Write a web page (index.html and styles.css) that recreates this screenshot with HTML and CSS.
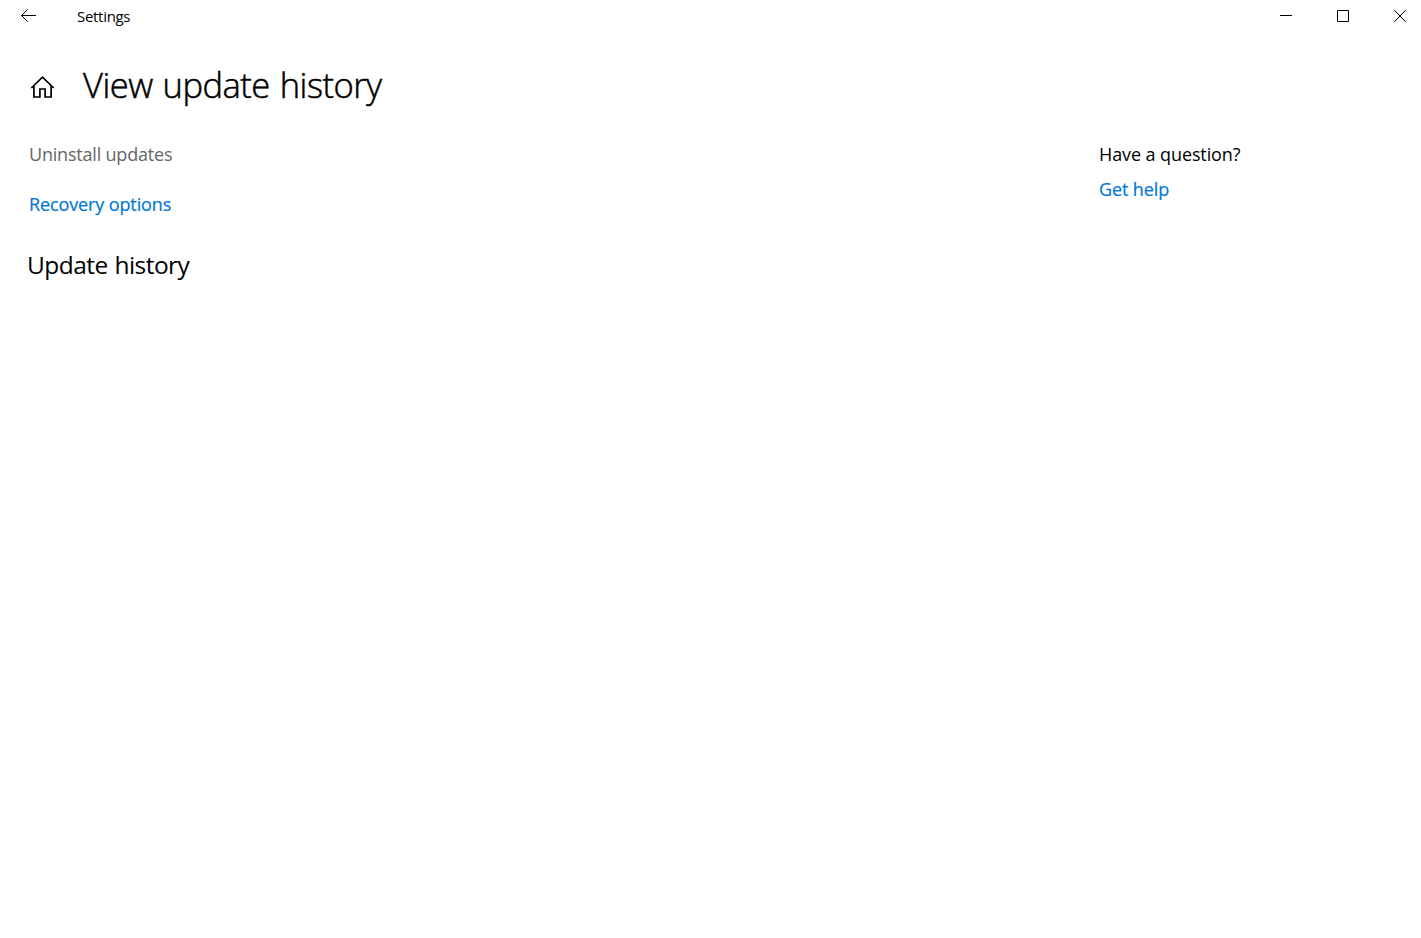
FILE: index.html
```html
<!DOCTYPE html>
<html lang="en">
<head>
  <meta charset="UTF-8" />
  <meta name="viewport" content="width=device-width, initial-scale=1.0"/>
  <title>Settings</title>
  <link rel="stylesheet" href="styles.css">
</head>
<body>

<header class="titlebar">
  <button class="back" aria-label="Back">
    <svg width="16" height="14" viewBox="0 0 16 14"><path d="M16 6.500H1.500M7.700 .4L1.500 6.500l6.200 6.200"/></svg>
  </button>
  <span class="app-name">Settings</span>
  <div class="window-controls">
    <button aria-label="Minimize"><svg width="12" height="12" viewBox="0 0 12 12"><path d="M0 5.5h12"/></svg></button>
    <button aria-label="Maximize"><svg width="12" height="12" viewBox="0 0 12 12"><path d="M.5 .5h11v11H.5z"/></svg></button>
    <button aria-label="Close"><svg width="12" height="12" viewBox="0 0 12 12"><path d="M0 0l12 12M12 0L0 12"/></svg></button>
  </div>
</header>

<div class="page-title">
  <svg class="home" width="25" height="22" viewBox="0 0 25 22"><path d="M1.300 12L12.500 1.200L23.700 12M3.900 9.800V21H9.900v-8h5.200v8h6V9.800"/></svg>
  <h1>View update history</h1>
</div>

<main class="content">
  <section class="history">
    <a class="link disabled">Uninstall updates</a>
    <a class="link" href="#">Recovery options</a>
    <h2>Update history</h2>
  </section>
  <aside class="help">
    <h3>Have a question?</h3>
    <a class="link" href="#">Get help</a>
  </aside>
</main>

</body>
</html>
```
FILE: styles.css
```css
* {
  margin: 0;
  padding: 0;
  box-sizing: border-box;
}

body {
  font-family: "Open Sans", "Noto Sans", sans-serif;
  background: #fff;
  color: #000;
}

button {
  background: none;
  border: none;
  display: flex;
  align-items: center;
  justify-content: center;
}

svg {
  fill: none;
  stroke: #000;
  display: block;
}

.titlebar {
  display: flex;
  align-items: center;
  height: 32px;
}

.back {
  width: 56px;
  height: 32px;
}

.app-name {
  margin-left: 21px;
  font-size: 15px;
  letter-spacing: -0.3px;
}

.window-controls {
  display: flex;
  gap: 15px;
  margin-left: auto;
}

.window-controls button {
  width: 42px;
  height: 32px;
}

.page-title {
  display: flex;
  align-items: center;
  height: 50px;
  margin: 29px 0 0 30px;
}

.home {
  stroke-width: 1.7;
  margin-top: 1px;
}

h1 {
  margin: -3px 0 0 28px;
  font-size: 34.5px;
  font-weight: 300;
  letter-spacing: -0.5px;
  word-spacing: 1.5px;
  -webkit-text-stroke: 0.5px #000;
}

.content {
  display: flex;
  padding: 31px 0 0 29px;
}

.history {
  width: 1070px;
}

.link {
  display: block;
  font-size: 18px;
  line-height: 24px;
  letter-spacing: -0.12px;
  color: #0078d4;
  text-decoration: none;
  -webkit-text-stroke: 0.2px #0078d4;
}

.link.disabled {
  color: #666;
  letter-spacing: -0.2px;
  margin-bottom: 26px;
  -webkit-text-stroke: 0;
}

h2 {
  margin: 32px 0 0 -2px;
  font-size: 24.5px;
  line-height: 34px;
  font-weight: 400;
  letter-spacing: -0.55px;
  word-spacing: 1px;
}

h3 {
  font-size: 18px;
  line-height: 24px;
  font-weight: 400;
  letter-spacing: -0.1px;
  margin-bottom: 11px;
}
```
